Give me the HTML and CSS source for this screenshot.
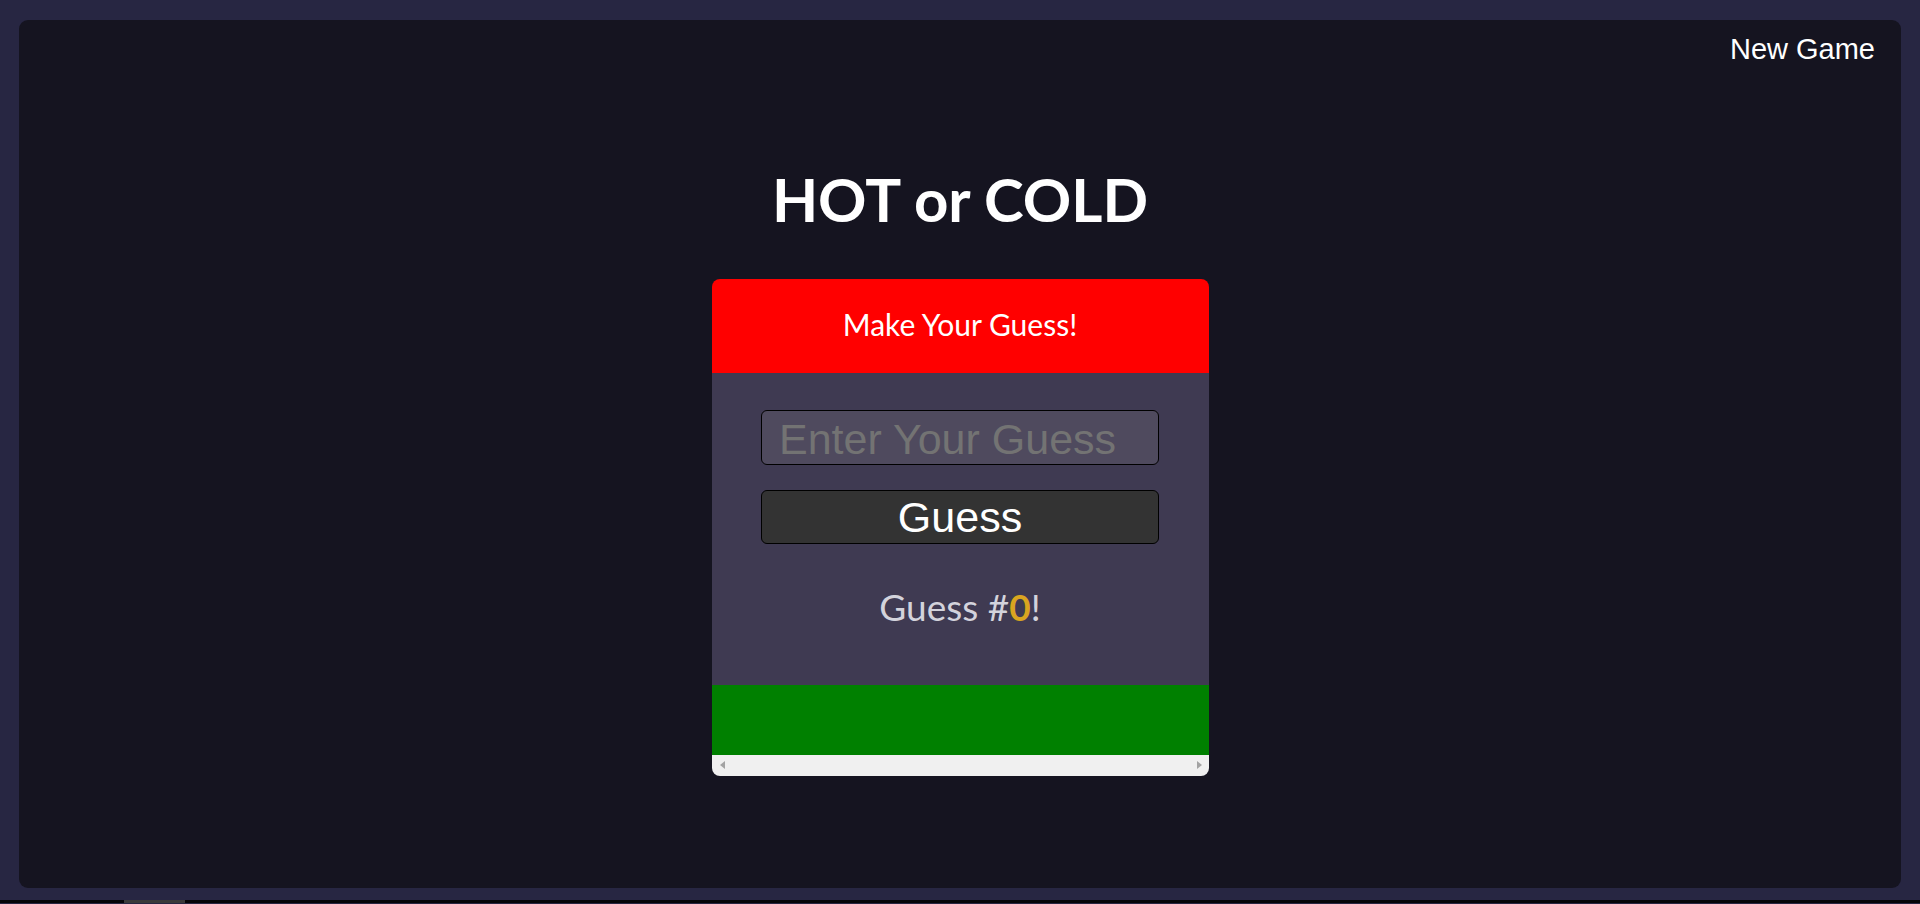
FILE: index.html
```html
<!DOCTYPE html>
<html lang="en">
<head>
<meta charset="utf-8">
<title>HOT or COLD</title>
<link rel="stylesheet" href="styles.css">
</head>
<body>
<div class="page">
  <main class="panel">
    <div class="topbar">
      <button class="new-game">New Game</button>
    </div>
    <h1 class="title">HOT or COLD</h1>
    <section class="card">
      <div class="card-head">Make Your Guess!</div>
      <div class="card-body">
        <input class="guess-input" type="text" placeholder="Enter Your Guess">
        <button class="guess-btn">Guess</button>
        <p class="count">Guess #<span class="num">0</span>!</p>
      </div>
      <div class="card-foot"></div>
      <div class="hscroll">
        <span class="arrow left"></span>
        <span class="arrow right"></span>
      </div>
    </section>
  </main>
  <div class="strip"><span class="strip-thumb"></span></div>
</div>
</body>
</html>
```

FILE: styles.css
```css
* { box-sizing: border-box; }
html, body { margin: 0; padding: 0; }
body {
  background: #272642;
  width: 1920px;
  height: 904px;
  overflow: hidden;
}
.page {
  display: flex;
  flex-direction: column;
  height: 904px;
  padding: 20px 0 0 0;
}
.panel {
  margin: 0 19px;
  height: 868px;
  background: #151420;
  border-radius: 9px;
  display: flex;
  flex-direction: column;
  align-items: center;
}
.topbar {
  align-self: stretch;
  display: flex;
  justify-content: flex-end;
  padding: 13px 26px 0 0;
}
.new-game {
  background: none;
  border: 0;
  padding: 0;
  margin: 0;
  color: #ffffff;
  font-family: "Liberation Sans", Arial, sans-serif;
  font-size: 29px;
  line-height: 33px;
}
.title {
  margin: 97px 0 0 0;
  color: #ffffff;
  font-family: Lato, "Open Sans", sans-serif;
  font-weight: 700;
  font-size: 60px;
  line-height: 72px;
}
.card {
  margin-top: 44px;
  width: 497px;
  border-radius: 8px;
  overflow: hidden;
  display: flex;
  flex-direction: column;
}
.card-head {
  height: 94px;
  background: #ff0000;
  color: #ffffff;
  font-family: Lato, "Open Sans", sans-serif;
  font-size: 30px;
  line-height: 36px;
  text-align: center;
  padding-top: 27px;
}
.card-body {
  height: 312px;
  background: #3f3a52;
  display: flex;
  flex-direction: column;
  align-items: center;
  padding-top: 37px;
}
.guess-input {
  width: 398px;
  height: 55px;
  margin: 0;
  padding: 3px 0 0 17px;
  background: #4f4a5e;
  border: 1px solid #000000;
  border-radius: 6px;
  color: #ffffff;
  font-family: "Liberation Sans", Arial, sans-serif;
  font-size: 43px;
  outline: none;
}
.guess-input::placeholder {
  color: #737373;
}
.guess-btn {
  margin-top: 25px;
  width: 398px;
  height: 54px;
  padding: 0;
  background: #333333;
  border: 1px solid #000000;
  border-radius: 6px;
  color: #ffffff;
  font-family: "Liberation Sans", Arial, sans-serif;
  font-size: 43px;
  line-height: 50px;
}
.count {
  margin: 41px 0 0 0;
  color: #d3d3dc;
  font-family: Lato, "Open Sans", sans-serif;
  font-size: 37px;
  line-height: 44px;
}
.num {
  color: #daa520;
  font-weight: 700;
}
.card-foot {
  height: 70px;
  background: #008000;
}
.hscroll {
  height: 21px;
  background: #f0f0f0;
  display: flex;
  justify-content: space-between;
  align-items: flex-start;
  padding: 6px 7px 0 8px;
}
.arrow {
  width: 0;
  height: 0;
  border-top: 4px solid transparent;
  border-bottom: 4px solid transparent;
}
.arrow.left { border-right: 5px solid #a3a3a3; }
.arrow.right { border-left: 5px solid #a3a3a3; }
.strip {
  margin-top: 12px;
  height: 3px;
  background: #050508;
  display: flex;
}
.strip-thumb {
  margin-left: 124px;
  width: 61px;
  background: #3a3a3a;
}
```
